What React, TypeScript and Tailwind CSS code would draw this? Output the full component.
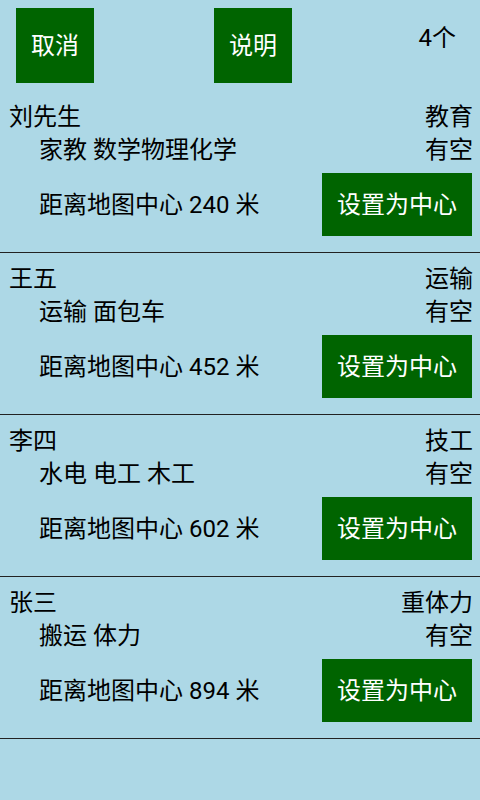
import React from 'react';

interface Worker {
  name: string;
  category: string;
  skills: string;
  status: string;
  distance: number;
}

const workers: Worker[] = [
  { name: '刘先生', category: '教育', skills: '家教 数学物理化学', status: '有空', distance: 240 },
  { name: '王五', category: '运输', skills: '运输 面包车', status: '有空', distance: 452 },
  { name: '李四', category: '技工', skills: '水电 电工 木工', status: '有空', distance: 602 },
  { name: '张三', category: '重体力', skills: '搬运 体力', status: '有空', distance: 894 },
];

const font = "font-['Roboto','Noto_Sans_CJK_SC',sans-serif]";

const WorkerRow: React.FC<{ worker: Worker }> = ({ worker }) => (
  <div className="border-b border-[#222] pt-[10px] pb-[16px]">
    <div className="flex justify-between pl-[9px] pr-[7px] h-[33px] items-center text-[24px] leading-[33px] text-black">
      <span>{worker.name}</span>
      <span>{worker.category}</span>
    </div>
    <div className="flex justify-between pl-[39px] pr-[7px] h-[33px] items-center text-[24px] leading-[33px] text-black">
      <span>{worker.skills}</span>
      <span>{worker.status}</span>
    </div>
    <div className="mt-[6px] flex items-center justify-between pl-[39px] pr-[8px] h-[63px]">
      <span className="text-[24px] text-black">距离地图中心 {worker.distance} 米</span>
      <button className="w-[150px] h-[63px] bg-[#006400] text-white text-[24px]">设置为中心</button>
    </div>
  </div>
);

export default function App() {
  return (
    <div className={`w-[480px] h-[800px] bg-[#add8e6] overflow-hidden ${font}`}>
      <header className="h-[91px] flex items-start pt-[8px]">
        <button className="ml-[16px] w-[78px] h-[75px] bg-[#006400] text-white text-[24px]">取消</button>
        <button className="ml-[120px] w-[78px] h-[75px] bg-[#006400] text-white text-[24px]">说明</button>
        <span className="ml-auto mr-[24px] mt-[16px] text-[24px] leading-[28px] text-black">4个</span>
      </header>
      {workers.map((w) => (
        <WorkerRow key={w.name} worker={w} />
      ))}
    </div>
  );
}
